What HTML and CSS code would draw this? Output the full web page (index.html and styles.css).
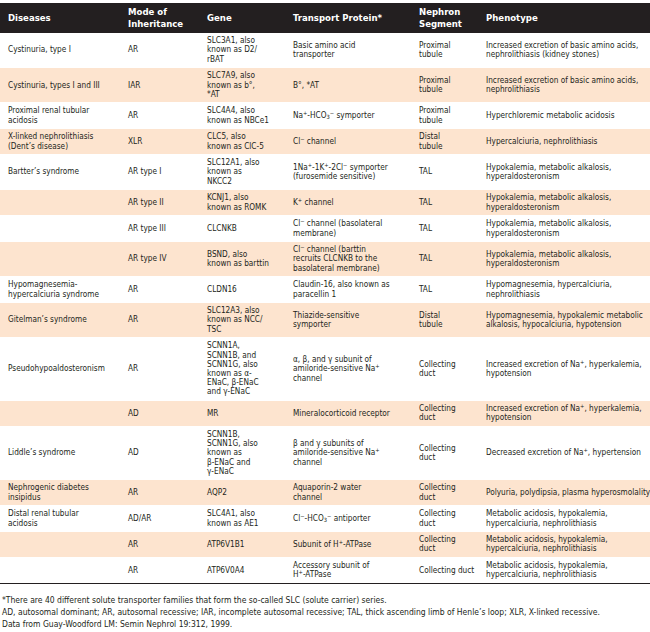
FILE: index.html
```html
<!DOCTYPE html>
<html lang="en">
<head>
<meta charset="utf-8">
<title>Inherited disorders of renal tubular transport</title>
<link rel="stylesheet" href="styles.css">
</head>
<body>
<div class="page">
  <table class="tbl">
    <colgroup>
      <col class="c1"><col class="c2"><col class="c3"><col class="c4"><col class="c5"><col class="c6">
    </colgroup>
    <thead>
      <tr>
        <th>Diseases</th>
        <th>Mode of<br>Inheritance</th>
        <th>Gene</th>
        <th>Transport Protein*</th>
        <th>Nephron<br>Segment</th>
        <th>Phenotype</th>
      </tr>
    </thead>
    <tbody>
      <tr>
        <td>Cystinuria, type I</td><td>AR</td>
        <td>SLC3A1, also<br>known as D2/<br>rBAT</td>
        <td>Basic amino acid<br>transporter</td>
        <td>Proximal<br>tubule</td>
        <td>Increased excretion of basic amino acids,<br>nephrolithiasis (kidney stones)</td>
      </tr>
      <tr class="alt">
        <td>Cystinuria, types I and III</td><td>IAR</td>
        <td>SLC7A9, also<br>known as b°,<br>*AT</td>
        <td>B°, *AT</td>
        <td>Proximal<br>tubule</td>
        <td>Increased excretion of basic amino acids,<br>nephrolithiasis</td>
      </tr>
      <tr>
        <td>Proximal renal tubular<br>acidosis</td><td>AR</td>
        <td>SLC4A4, also<br>known as NBCe1</td>
        <td>Na<sup>+</sup>-HCO<sub>3</sub><sup>−</sup> symporter</td>
        <td>Proximal<br>tubule</td>
        <td>Hyperchloremic metabolic acidosis</td>
      </tr>
      <tr class="alt">
        <td>X-linked nephrolithiasis<br>(Dent’s disease)</td><td>XLR</td>
        <td>CLC5, also<br>known as ClC-5</td>
        <td>Cl<sup>−</sup> channel</td>
        <td>Distal<br>tubule</td>
        <td>Hypercalciuria, nephrolithiasis</td>
      </tr>
      <tr>
        <td>Bartter’s syndrome</td><td>AR type I</td>
        <td>SLC12A1, also<br>known as<br>NKCC2</td>
        <td>1Na<sup>+</sup>-1K<sup>+</sup>-2Cl<sup>−</sup> symporter<br>(furosemide sensitive)</td>
        <td>TAL</td>
        <td>Hypokalemia, metabolic alkalosis,<br>hyperaldosteronism</td>
      </tr>
      <tr class="alt">
        <td></td><td>AR type II</td>
        <td>KCNJ1, also<br>known as ROMK</td>
        <td>K<sup>+</sup> channel</td>
        <td>TAL</td>
        <td>Hypokalemia, metabolic alkalosis,<br>hyperaldosteronism</td>
      </tr>
      <tr>
        <td></td><td>AR type III</td>
        <td>CLCNKB</td>
        <td>Cl<sup>−</sup> channel (basolateral<br>membrane)</td>
        <td>TAL</td>
        <td>Hypokalemia, metabolic alkalosis,<br>hyperaldosteronism</td>
      </tr>
      <tr class="alt">
        <td></td><td>AR type IV</td>
        <td>BSND, also<br>known as barttin</td>
        <td>Cl<sup>−</sup> channel (barttin<br>recruits CLCNKB to the<br>basolateral membrane)</td>
        <td>TAL</td>
        <td>Hypokalemia, metabolic alkalosis,<br>hyperaldosteronism</td>
      </tr>
      <tr>
        <td>Hypomagnesemia-<br>hypercalciuria syndrome</td><td>AR</td>
        <td>CLDN16</td>
        <td>Claudin-16, also known as<br>paracellin 1</td>
        <td>TAL</td>
        <td>Hypomagnesemia, hypercalciuria,<br>nephrolithiasis</td>
      </tr>
      <tr class="alt">
        <td>Gitelman’s syndrome</td><td>AR</td>
        <td>SLC12A3, also<br>known as NCC/<br>TSC</td>
        <td>Thiazide-sensitive<br>symporter</td>
        <td>Distal<br>tubule</td>
        <td>Hypomagnesemia, hypokalemic metabolic<br>alkalosis, hypocalciuria, hypotension</td>
      </tr>
      <tr>
        <td>Pseudohypoaldosteronism</td><td>AR</td>
        <td>SCNN1A,<br>SCNN1B, and<br>SCNN1G, also<br>known as α-<br>ENaC, β-ENaC<br>and γ-ENaC</td>
        <td>α, β, and γ subunit of<br>amiloride-sensitive Na<sup>+</sup><br>channel</td>
        <td>Collecting<br>duct</td>
        <td>Increased excretion of Na<sup>+</sup>, hyperkalemia,<br>hypotension</td>
      </tr>
      <tr class="alt">
        <td></td><td>AD</td>
        <td>MR</td>
        <td>Mineralocorticoid receptor</td>
        <td>Collecting<br>duct</td>
        <td>Increased excretion of Na<sup>+</sup>, hyperkalemia,<br>hypotension</td>
      </tr>
      <tr>
        <td>Liddle’s syndrome</td><td>AD</td>
        <td>SCNN1B,<br>SCNN1G, also<br>known as<br>β-ENaC and<br>γ-ENaC</td>
        <td>β and γ subunits of<br>amiloride-sensitive Na<sup>+</sup><br>channel</td>
        <td>Collecting<br>duct</td>
        <td>Decreased excretion of Na<sup>+</sup>, hypertension</td>
      </tr>
      <tr class="alt">
        <td>Nephrogenic diabetes<br>insipidus</td><td>AR</td>
        <td>AQP2</td>
        <td>Aquaporin-2 water<br>channel</td>
        <td>Collecting<br>duct</td>
        <td>Polyuria, polydipsia, plasma hyperosmolality</td>
      </tr>
      <tr>
        <td>Distal renal tubular<br>acidosis</td><td>AD/AR</td>
        <td>SLC4A1, also<br>known as AE1</td>
        <td>Cl<sup>−</sup>-HCO<sub>3</sub><sup>−</sup> antiporter</td>
        <td>Collecting<br>duct</td>
        <td>Metabolic acidosis, hypokalemia,<br>hypercalciuria, nephrolithiasis</td>
      </tr>
      <tr class="alt">
        <td></td><td>AR</td>
        <td>ATP6V1B1</td>
        <td>Subunit of H<sup>+</sup>-ATPase</td>
        <td>Collecting<br>duct</td>
        <td>Metabolic acidosis, hypokalemia,<br>hypercalciuria, nephrolithiasis</td>
      </tr>
      <tr class="last">
        <td></td><td>AR</td>
        <td>ATP6V0A4</td>
        <td>Accessory subunit of<br>H<sup>+</sup>-ATPase</td>
        <td>Collecting duct</td>
        <td>Metabolic acidosis, hypokalemia,<br>hypercalciuria, nephrolithiasis</td>
      </tr>
    </tbody>
  </table>
  <div class="notes">
    <p>*There are 40 different solute transporter families that form the so-called SLC (solute carrier) series.</p>
    <p>AD, autosomal dominant; AR, autosomal recessive; IAR, incomplete autosomal recessive; TAL, thick ascending limb of Henle’s loop; XLR, X-linked recessive.</p>
    <p>Data from Guay-Woodford LM: Semin Nephrol 19:312, 1999.</p>
  </div>
</div>
</body>
</html>
```

FILE: styles.css
```css
html, body {
  margin: 0;
  padding: 0;
  background: #ffffff;
}

.page {
  width: 650px;
  padding-top: 3px;
  font-family: "Liberation Sans Narrow", "DejaVu Sans Condensed", "Liberation Sans", sans-serif;
  color: #231f20;
}

.tbl {
  width: 650px;
  border-collapse: collapse;
  table-layout: fixed;
}

.c1 { width: 124px; }
.c2 { width: 79px; }
.c3 { width: 86px; }
.c4 { width: 126px; }
.c5 { width: 67px; }
.c6 { width: 168px; }

.tbl th {
  background: #231f20;
  color: #ffffff;
  font-weight: bold;
  font-size: 9.5px;
  line-height: 11.7px;
  text-align: left;
  vertical-align: middle;
  height: 30px;
  padding: 0 0 0 4px;
  white-space: nowrap;
}

.tbl th:first-child,
.tbl td:first-child {
  padding-left: 8px;
}

.tbl td {
  font-size: 8.2px;
  line-height: 9.2px;
  vertical-align: middle;
  text-align: left;
  padding: 3.25px 0 3.25px 4px;
  white-space: nowrap;
  border-bottom: 0.5px solid #ffffff;
}

.tbl tr.alt td {
  background: #fde4cf;
}

.tbl tr.last td {
  border-bottom: 1.5px solid #231f20;
}

.tbl sup,
.tbl sub {
  font-size: 70%;
  line-height: 0;
}

.tbl sup { vertical-align: 0.45em; }
.tbl sub { vertical-align: -0.25em; }

.notes {
  padding: 10px 0 0 2px;
}

.notes p {
  margin: 0;
  font-size: 8.5px;
  line-height: 12px;
  white-space: nowrap;
}
```
